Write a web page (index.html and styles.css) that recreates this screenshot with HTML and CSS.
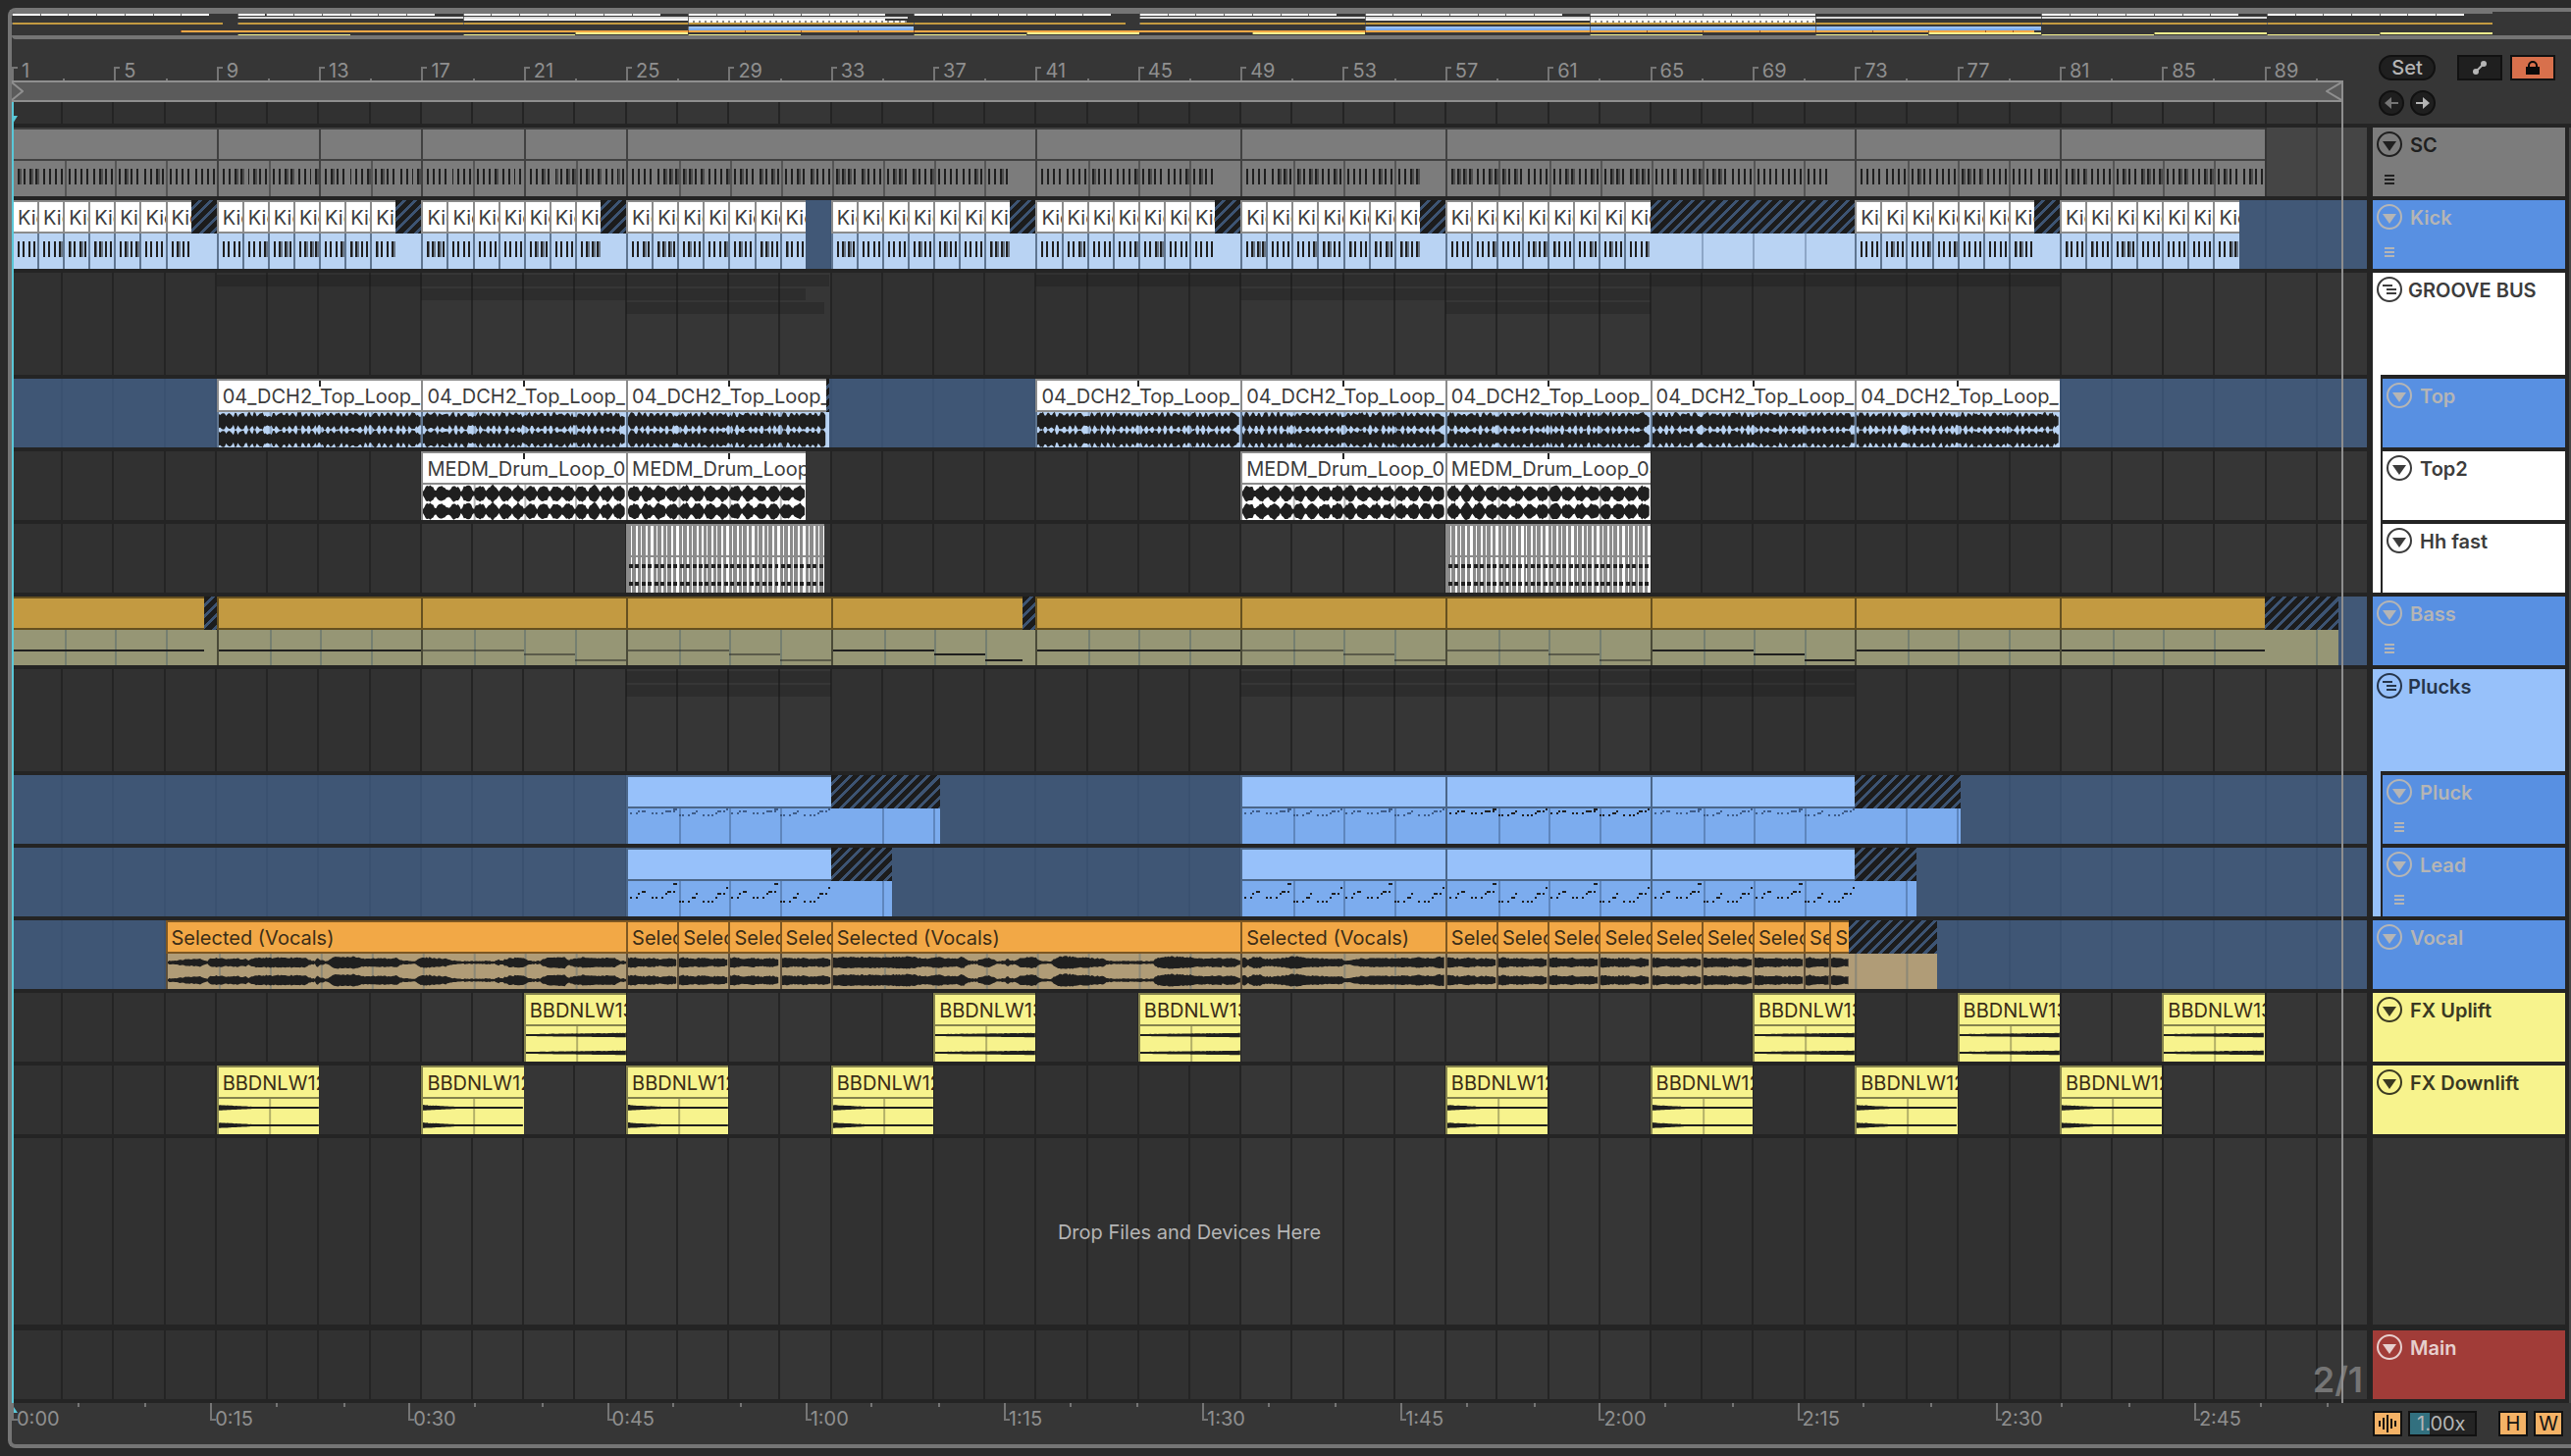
FILE: index.html
```html
<!DOCTYPE html>
<html lang="en">
<head>
    <meta charset="UTF-8">
    <meta name="viewport" content="width=device-width, initial-scale=1.0">
    <title>Arrangement</title>
    <link rel="stylesheet" href="styles.css">
</head>
<body>
    <svg width="0" height="0" class="defs">
        <symbol id="fold" viewBox="0 0 26 26">
            <circle cx="13" cy="13" r="12" fill="none" stroke="currentColor" stroke-width="2"/>
            <path d="M6 10h14l-7 10z" fill="currentColor"/>
        </symbol>
        <symbol id="group" viewBox="0 0 26 26">
            <circle cx="13" cy="13" r="12" fill="none" stroke="currentColor" stroke-width="2"/>
            <path d="M6 9h10M10 13h10M10 17h10" stroke="currentColor" stroke-width="2"/>
        </symbol>
        <symbol id="lines" viewBox="0 0 10 10">
            <path d="M0 1h10M0 5h10M0 9h10" stroke="currentColor" stroke-width="2"/>
        </symbol>
    </svg>

    <div class="frame">
        <div class="overview" id="overview"></div>

        <div class="top">
            <div class="timeline">
                <div class="bar-ruler" id="barRuler"></div>
                <div class="loop">
                    <svg width="12" height="18" viewBox="0 0 12 18"><path d="M0 0l11 9-11 9" fill="none" stroke="#8f8f8f" stroke-width="2"/></svg>
                    <svg width="16" height="18" viewBox="0 0 16 18"><path d="M16 0L1 9l15 9" fill="none" stroke="#8f8f8f" stroke-width="2"/></svg>
                </div>
                <div class="scrub">
                    <div class="grid"></div>
                    <svg class="marker" width="6" height="8" viewBox="0 0 6 8"><path d="M0 0h6L1 8H0z" fill="#5ac8d8"/></svg>
                </div>
            </div>
            <div class="controls">
                <div class="controls-row">
                    <button class="pill">Set</button>
                    <button class="box first" aria-label="Automation">
                        <svg width="16" height="16" viewBox="0 0 16 16"><path d="M4 12l8-8" stroke="currentColor" stroke-width="2"/><circle cx="4" cy="12" r="3" fill="currentColor"/><circle cx="12" cy="4" r="3" fill="currentColor"/></svg>
                    </button>
                    <button class="box lock" aria-label="Lock envelopes">
                        <svg width="14" height="16" viewBox="0 0 14 16"><path d="M3 8V6a4 4 0 0 1 8 0v2" fill="none" stroke="currentColor" stroke-width="2"/><path d="M0 7h14v8H0z" fill="currentColor"/></svg>
                    </button>
                </div>
                <div class="controls-row">
                    <button class="round dim" aria-label="Previous locator">
                        <svg width="14" height="12" viewBox="0 0 14 12"><path d="M0 6l7-6v12z" fill="currentColor"/><path d="M6 6h8" stroke="currentColor" stroke-width="2"/></svg>
                    </button>
                    <button class="round" aria-label="Next locator">
                        <svg width="14" height="12" viewBox="0 0 14 12"><path d="M14 6L7 0v12z" fill="currentColor"/><path d="M0 6h8" stroke="currentColor" stroke-width="2"/></svg>
                    </button>
                </div>
            </div>
        </div>

        <div class="middle">
            <div class="timeline lanes">
                <div class="grid"></div>
                <div class="lane sc" data-track="sc"></div>
                <div class="lane blue kick" data-track="kick"></div>
                <div class="lane tall" data-ghost="groove"></div>
                <div class="lane blue top-loop" data-track="top"></div>
                <div class="lane top2" data-track="top2"></div>
                <div class="lane hh" data-track="hh"></div>
                <div class="lane blue bass" data-track="bass"></div>
                <div class="lane tall" data-ghost="plucks"></div>
                <div class="lane blue pluck" data-track="pluck"></div>
                <div class="lane blue lead" data-track="lead"></div>
                <div class="lane blue vocal" data-track="vocal"></div>
                <div class="lane fx" data-track="uplift"></div>
                <div class="lane fx" data-track="downlift"></div>
                <div class="drop">Drop Files and Devices Here</div>
                <div class="lane main"><span class="zoom-level">2/1</span></div>
                <div class="playhead"></div>
            </div>
            <div class="headers">
                <div class="header h-sc"><button aria-label="Fold SC"><svg><use href="#fold"/></svg></button><span>SC</span><svg class="menu"><use href="#lines"/></svg></div>
                <div class="header h-blue"><button aria-label="Fold Kick"><svg><use href="#fold"/></svg></button><span>Kick</span><svg class="menu"><use href="#lines"/></svg></div>
                <div class="group h-white">
                    <div class="header tall"><button aria-label="Fold GROOVE BUS"><svg><use href="#group"/></svg></button><span>GROOVE BUS</span></div>
                    <div class="children">
                        <div class="header h-blue"><button aria-label="Fold Top"><svg><use href="#fold"/></svg></button><span>Top</span></div>
                        <div class="header h-white"><button aria-label="Fold Top2"><svg><use href="#fold"/></svg></button><span>Top2</span></div>
                        <div class="header h-white"><button aria-label="Fold Hh fast"><svg><use href="#fold"/></svg></button><span>Hh fast</span></div>
                    </div>
                </div>
                <div class="header h-blue"><button aria-label="Fold Bass"><svg><use href="#fold"/></svg></button><span>Bass</span><svg class="menu"><use href="#lines"/></svg></div>
                <div class="group h-light">
                    <div class="header tall"><button aria-label="Fold Plucks"><svg><use href="#group"/></svg></button><span>Plucks</span></div>
                    <div class="children">
                        <div class="header h-blue"><button aria-label="Fold Pluck"><svg><use href="#fold"/></svg></button><span>Pluck</span><svg class="menu"><use href="#lines"/></svg></div>
                        <div class="header h-blue"><button aria-label="Fold Lead"><svg><use href="#fold"/></svg></button><span>Lead</span><svg class="menu"><use href="#lines"/></svg></div>
                    </div>
                </div>
                <div class="header h-blue"><button aria-label="Fold Vocal"><svg><use href="#fold"/></svg></button><span>Vocal</span></div>
                <div class="header h-yellow"><button aria-label="Fold FX Uplift"><svg><use href="#fold"/></svg></button><span>FX Uplift</span></div>
                <div class="header h-yellow"><button aria-label="Fold FX Downlift"><svg><use href="#fold"/></svg></button><span>FX Downlift</span></div>
                <div class="header-space"></div>
                <div class="header h-main"><button aria-label="Fold Main"><svg><use href="#fold"/></svg></button><span>Main</span></div>
            </div>
            <div class="edge"></div>
        </div>

        <div class="bottom">
            <div class="timeline time-ruler" id="timeRuler">
                <svg class="marker" width="6" height="9" viewBox="0 0 6 9"><path d="M0 0l6 9H0z" fill="#5ac8d8"/></svg>
            </div>
            <div class="bottom-controls">
                <button class="key" aria-label="Waveform zoom">
                    <svg width="18" height="18" viewBox="0 0 18 18"><path d="M1 6v6M5 3v12M9 0v18M13 4v10M17 6v6" stroke="currentColor" stroke-width="2"/></svg>
                </button>
                <input class="speed" type="text" value="1.00x" aria-label="Playback speed">
                <button class="key height">H</button>
                <button class="key">W</button>
            </div>
        </div>
    </div>
    <script src="script.js"></script>
</body>
</html>
```
FILE: styles.css
```css
* {
    box-sizing: border-box;
}
body {
    margin: 0;
    background: #2a2a2a;
    color: #b5b5b5;
    font-family: Inter, "Liberation Sans", sans-serif;
    font-size: 20px;
    line-height: 20px;
}
button, input {
    font: inherit;
    color: inherit;
    padding: 0;
    margin: 0;
}
svg {
    display: block;
    flex: none;
}
.defs {
    position: absolute;
}
.frame {
    display: flex;
    flex-direction: column;
    height: calc(100vh - 16px);
    margin: 8px 0 8px 8px;
    border: 4px solid #757575;
    border-right: none;
    border-radius: 8px 0 0 8px;
    background: #363636;
    overflow: hidden;
}

/* overview strip */
.overview {
    flex: none;
    height: 28px;
    border-bottom: 4px solid #757575;
    border-radius: 0 0 0 4px;
    overflow: hidden;
}
.mini-row {
    position: relative;
    height: 2px;
}
.mini-row.gap {
    margin-bottom: 1px;
}
.mini-row.gap2 {
    margin-bottom: 2px;
}
.mini {
    position: absolute;
    top: 0;
    bottom: 0;
    border-left: 1px solid #6b6b6b;
}
.mini-sc { background: #757575; }
.mini-kick { background: #ffffff; }
.mini-top { background: #d8d8d8; }
.mini-top2 { background: #ffffff; }
.mini-hh { background: repeating-linear-gradient(90deg, #ffffff 0 4px, #8b8b8b 4px 6px); }
.mini-bass { background: #c39a41; }
.mini-pluck { background: #97c1fa; }
.mini-lead { background: #7cacee; }
.mini-vocal { background: #f2a846; border-color: #a0561f; }
.mini-uplift, .mini-downlift { background: #f7f38d; border-color: #85834d; }

/* shared columns */
.top, .middle, .bottom {
    display: flex;
}
.timeline {
    flex: 1;
    min-width: 0;
    position: relative;
}
.top {
    flex: none;
    height: 90px;
    border-bottom: 4px solid #242424;
}
.bar-ruler {
    display: flex;
    height: 42px;
    color: #8f8f8f;
}
.bar {
    flex: 1;
    position: relative;
    padding: 22px 0 0 10px;
}
.bar::before {
    content: "";
    position: absolute;
    left: 0;
    bottom: 0;
    width: 4px;
    height: 12px;
    border-left: 2px solid #757575;
    border-top: 2px solid #757575;
}
.bar::after {
    content: "";
    position: absolute;
    left: 50%;
    bottom: 0;
    width: 2px;
    height: 2px;
    background: #757575;
}
.loop {
    display: flex;
    justify-content: space-between;
    height: 22px;
    width: 99%;
    background: #5b5b5b;
    border: 2px solid #8f8f8f;
    border-left: none;
}
.scrub {
    position: relative;
    height: 22px;
}
.scrub .marker {
    position: absolute;
    left: 0;
    top: 14px;
}
.grid {
    position: absolute;
    inset: 0;
    display: flex;
}
.cell {
    flex: 1;
    background: #363636;
    border-left: 2px solid #242424;
}
.cell.dark {
    background: #313131;
}
.cell:first-child {
    border-left: none;
}

.controls {
    width: 208px;
    padding: 16px 0 0 12px;
}
.controls-row {
    display: flex;
    gap: 6px;
    margin-bottom: 10px;
}
.controls button {
    display: flex;
    align-items: center;
    justify-content: center;
    height: 26px;
    border: 2px solid #111111;
    background: #1f1f1f;
    color: #b5b5b5;
}
.controls .pill {
    width: 58px;
    border-radius: 13px;
    font-weight: 500;
}
.controls .box {
    width: 46px;
}
.controls .first {
    margin: 0 2px 0 16px;
}
.controls .lock {
    background: #d8704c;
    color: #0a0a0a;
}
.controls .round {
    width: 26px;
    border-radius: 13px;
}
.controls .dim {
    color: #757575;
}

/* track lanes */
.middle {
    flex: 1;
    min-height: 0;
}
.lanes {
    display: flex;
    flex-direction: column;
}
.lane {
    position: relative;
    flex: none;
    height: 74px;
    border-bottom: 4px solid #242424;
    overflow: hidden;
}
.lane.tall {
    height: 108px;
}
.lane.sc {
    background: rgba(255, 255, 255, 0.08);
}
.lane.blue {
    background: rgba(73, 110, 159, 0.62);
}
.drop {
    position: relative;
    flex: 1;
    display: flex;
    align-items: center;
    justify-content: center;
    padding-top: 2px;
    border-bottom: 6px solid #242424;
}
.zoom-level {
    position: absolute;
    right: 4px;
    bottom: 2px;
    font-size: 36px;
    line-height: 36px;
    font-weight: 600;
    color: #757575;
}
.playhead {
    position: absolute;
    top: -48px;
    bottom: 0;
    left: 0;
    width: 99%;
    border-right: 2px solid #8f8f8f;
    border-left: 2px solid #5ac8d8;
    clip-path: inset(22px 0 0 0);
    pointer-events: none;
}

.clip {
    position: absolute;
    top: 0;
    bottom: 0;
    color: #3c3c3c;
    overflow: hidden;
}
.clip-head {
    height: 34px;
    padding: 2px 0 0 4px;
    border: 2px solid var(--line);
    border-right: none;
    background: var(--head);
    line-height: 28px;
    white-space: nowrap;
    overflow: hidden;
}
.clip-body {
    width: 100%;
    height: 36px;
    background: var(--body);
    border-left: 2px solid var(--edge);
}
.clip.hatch .clip-head {
    border: none;
    background: repeating-linear-gradient(135deg, #1c1c1c 0 5px, #3d5473 5px 8px);
}
.clip.hatch .clip-body {
    border-left: none;
}
.clip.split .clip-head::before {
    content: "";
    position: absolute;
    left: 104px;
    top: 2px;
    width: 2px;
    height: 6px;
    background: #242424;
}
.clip-body .beat { fill: var(--grid); }
.clip-body .note { fill: #1f1f1f; }
.clip-body .soft { fill: #1f1f1f; opacity: 0.5; }

.sc { --head: #7c7c7c; --body: #7c7c7c; --line: #414141; --edge: #414141; --grid: #555555; }
.kick { --head: #ffffff; --body: #b9d3f3; --line: #8b8b8b; --edge: #5f7590; --grid: #8da6c6; }
.top-loop { --head: #ffffff; --body: #b9d3f3; --line: #8b8b8b; --edge: #5f7590; --grid: #8da6c6; }
.top2 { --head: #ffffff; --body: #ffffff; --line: #8b8b8b; --edge: #8b8b8b; --grid: #b5b5b5; }
.hh { --head: #ffffff; --body: #ffffff; --line: #8b8b8b; --edge: #8b8b8b; --grid: #8b8b8b; }
.bass { --head: #c39a41; --body: #969675; --line: #66501f; --edge: #4a4a38; --grid: #757f70; }
.pluck, .lead { --head: #97c1fa; --body: #7cacee; --line: #4b6688; --edge: #4b6688; --grid: #5e86bd; }
.vocal { --head: #f2a846; --body: #b09c77; --line: #7d5722; --edge: #5c4e3a; --grid: #8c8876; }
.fx { --head: #f7f38d; --body: #f7f38d; --line: #85834d; --edge: #85834d; --grid: #b3b068; }
.fx .clip, .vocal .clip { color: #3b2d17; }
.pluck .soft { fill: #2f4a70; opacity: 0.8; }
.hh .clip-head {
    padding: 0;
}
.stripes {
    width: 100%;
    height: 30px;
}

.ghost {
    position: absolute;
    height: 12px;
    background: rgba(20, 20, 20, 0.25);
}
.ghost-1 { top: 2px; }
.ghost-2 { top: 16px; }
.ghost-3 { top: 30px; }

/* track headers */
.headers {
    display: flex;
    flex-direction: column;
    width: 206px;
    border-left: 6px solid #242424;
    border-right: 4px solid #242424;
}
.header {
    position: relative;
    flex: none;
    display: flex;
    align-items: flex-start;
    gap: 8px;
    height: 74px;
    padding: 4px;
    border-bottom: 4px solid #242424;
    font-weight: 600;
}
.header button {
    border: none;
    background: none;
}
.header button svg {
    width: 26px;
    height: 26px;
}
.header span {
    line-height: 28px;
}
.header .menu {
    position: absolute;
    left: 12px;
    top: 48px;
    width: 10px;
    height: 10px;
}
.group {
    flex: none;
    border-bottom: 4px solid #242424;
}
.group .header {
    border-bottom: none;
}
.group .header.tall {
    height: 104px;
    gap: 6px;
}
.children {
    margin-left: 8px;
    border-left: 2px solid #242424;
}
.children .header {
    border-top: 4px solid #242424;
}
.header-space {
    flex: 1;
    border-bottom: 6px solid #242424;
}
.h-sc { background: #7c7c7c; color: #1f1f1f; }
.h-blue { background: #5890e2; color: #b5b5b5; }
.h-white { background: #ffffff; color: #3c3c3c; }
.h-light { background: #97c1fa; color: #26364c; }
.h-yellow { background: #f7f38d; color: #3a3922; }
.h-main { background: #a13c38; color: #e6cfce; }
.edge {
    width: 2px;
    background: #464646;
}

/* bottom row */
.bottom {
    flex: none;
    height: 42px;
}
.time-ruler {
    display: flex;
    overflow: hidden;
    color: #8f8f8f;
}
.time-ruler .marker {
    position: absolute;
    left: 0;
    top: 1px;
}
.time {
    flex: none;
    position: relative;
    padding: 6px 0 0 5px;
}
.time::before {
    content: "";
    position: absolute;
    left: 0;
    top: 0;
    width: 4px;
    height: 16px;
    border-left: 2px solid #757575;
    border-bottom: 2px solid #757575;
}
.time i {
    position: absolute;
    top: 0;
    left: 33%;
    width: 2px;
    height: 4px;
    background: #757575;
}
.time i + i {
    left: 67%;
}
.bottom-controls {
    display: flex;
    gap: 6px;
    width: 208px;
    padding: 8px 8px 8px 6px;
}
.key {
    display: flex;
    align-items: center;
    justify-content: center;
    width: 30px;
    height: 26px;
    border: 2px solid #111111;
    background: #f4b266;
    color: #111111;
}
.bottom-controls .height {
    margin-left: auto;
}
.speed {
    width: 70px;
    height: 26px;
    padding-left: 7px;
    border: 2px solid #111111;
    background: linear-gradient(90deg, #32707f 20px, #242424 20px);
}
```
FILE: script.js
```javascript
const BARS = 92;
const SECONDS_PER_BAR = 60 / 124 * 4;

// [start, end, label, kind]
const tracks = {
    sc: [], kick: [], top: [], top2: [], hh: [], bass: [],
    pluck: [], lead: [], vocal: [], uplift: [], downlift: []
};

function clips(track, edges, label) {
    for (let i = 0; i < edges.length - 1; i++) {
        tracks[track].push([edges[i], edges[i + 1], label || '', 'clip']);
    }
}

function hatch(track, start, end) {
    tracks[track].push([start, end, '', 'hatch']);
}

clips('sc', [1, 9, 13, 17, 21, 25, 41, 49, 57, 73, 81, 89]);

[1, 9, 17, 25, 33, 41, 49, 57, 73, 81].forEach(start => {
    const count = start === 57 ? 8 : 7;
    for (let i = 0; i < count; i++) {
        tracks.kick.push([start + i, start + i + 1, 'Kick', 'clip']);
    }
});
[8, 16, 24, 40, 48, 56, 80].forEach(bar => hatch('kick', bar, bar + 1));
hatch('kick', 65, 73);

clips('top', [9, 17, 25, 32.8], '04_DCH2_Top_Loop_');
hatch('top', 32.8, 32.95);
clips('top', [41, 49, 57, 65, 73, 81], '04_DCH2_Top_Loop_');
clips('top2', [17, 25, 32], 'MEDM_Drum_Loop_04');
clips('top2', [49, 57, 65], 'MEDM_Drum_Loop_04');
clips('hh', [25, 32.75]);
clips('hh', [57, 65]);

clips('bass', [1, 8.5]);
hatch('bass', 8.5, 9);
clips('bass', [9, 17, 25, 33, 40.5]);
hatch('bass', 40.5, 41);
clips('bass', [41, 49, 57, 65, 73, 81, 89]);
hatch('bass', 89, 91.9);

clips('pluck', [25, 33]);
hatch('pluck', 33, 37.26);
clips('pluck', [49, 57, 65, 73]);
hatch('pluck', 73, 77.13);
clips('lead', [25, 33]);
hatch('lead', 33, 35.4);
clips('lead', [49, 57, 65, 73]);
hatch('lead', 73, 75.4);

clips('vocal', [7, 25, 27, 29, 31, 33, 49, 57, 59, 61, 63, 65, 67, 69, 71, 72, 72.76], 'Selected (Vocals)');
hatch('vocal', 72.76, 76.2);

[21, 37, 45, 69, 77, 85].forEach(b => clips('uplift', [b, b + 4], 'BBDNLW13_Uplift'));
[9, 17, 25, 33, 57, 65, 73, 81].forEach(b => clips('downlift', [b, b + 4], 'BBDNLW12_Downlift'));

const ghosts = {
    groove: [[1, 9, 32.95], [1, 41, 81], [2, 17, 32], [2, 49, 65], [3, 25, 32.75], [3, 57, 65]],
    plucks: [[1, 25, 33], [1, 49, 73], [2, 25, 33], [2, 49, 73]]
};

let seed = 7;
function rand() {
    seed = (seed * 16807) % 2147483647;
    return seed / 2147483647;
}

function rect(x, y, w, h, cls) {
    return `<rect class="${cls}" x="${x}" y="${y}" width="${w}" height="${h}"/>`;
}

// stereo waveform, one filled shape for each channel
function wave(width, amp) {
    const up = [];
    const down = [];
    for (let x = 0; x <= width; x += 1.5) {
        const a = amp(x);
        up.push([x, a]);
        down.unshift([x, -a * (0.85 + rand() * 0.2)]);
    }
    return [9, 27].map(mid =>
        `<path class="note" d="M${up.concat(down).map(p => p[0].toFixed(1) + ' ' + (mid + p[1]).toFixed(1)).join('L')}Z"/>`
    ).join('');
}

function kickNotes(start, end) {
    let out = '';
    for (let b = start; b < end; b++) {
        if ([40, 48, 56, 72].includes(b)) continue;
        for (let i = 0; i < 4; i++) {
            const x = (b - start) * 26 + 4 + i * 6;
            out += rect(x, 8, 2, 16, 'note');
            if (rand() < 0.3) out += rect(x + 2, 8, 2, 16, 'soft');
        }
    }
    return out;
}

const phrase = [
    [2, 16, 2], [8, 16, 2], [10, 12, 2], [14, 10, 4], [24, 16, 2], [28, 16, 2], [34, 16, 2], [38, 12, 2], [40, 10, 4], [46, 10, 2], [46, 2, 4],
    [52, 20, 2], [55, 20, 2], [61, 20, 2], [65, 16, 4], [69, 12, 2], [76, 20, 2], [82, 20, 2], [86, 20, 2], [90, 16, 2], [92, 12, 4], [98, 12, 2], [101, 6, 2]
];

function melody(bars, flat, cls) {
    let out = '';
    for (let b = 0; b < bars; b += 4) {
        phrase.forEach(([x, y, w]) => {
            if (flat) y = y >= 20 ? 6 : y >= 16 ? 4 : y >= 10 ? 2 : 0;
            out += rect(b * 26 + x, y, w, 2, cls);
        });
    }
    return out;
}

function bassLine(start, bars) {
    const cls = [17, 25, 49, 57].includes(start) ? 'soft' : 'note';
    if ([1, 9, 41, 73, 81].includes(start)) return rect(0, 20, bars * 26, 2, cls);
    return rect(0, 20, 104, 2, cls) + rect(104, 24, 52, 2, cls) + rect(156, 30, (bars - 6) * 26, 2, cls);
}

// repeating 5-hit pattern of the closed hat
function hatStripes(bars, height) {
    let out = '';
    for (let x = 0; x < bars * 26; x += 26) {
        [0, 4, 10, 14, 20].forEach(s => {
            out += rect(x + s, 0, s % 10 ? 4 : 3, height, 'beat');
        });
    }
    return out;
}

function content(track, start, end) {
    const bars = end - start;
    const w = bars * 26;
    let level = 4;
    let target = 5;
    switch (track) {
        case 'sc':
        case 'kick':
            return kickNotes(start, end);
        case 'top':
            return wave(w, x => 9 - (x % 6.5 < 3 ? 2 + rand() * 3 : rand()) - (x % 52 > 49 ? 4 : 0));
        case 'top2':
            return wave(w, x => Math.max(2, 1 + 8 * Math.sqrt(Math.abs(Math.sin(x / 13 * Math.PI))) - rand() * 2));
        case 'hh':
            let out = hatStripes(bars, 36);
            for (let x = 0; x < w; x += 6.5) out += rect(x + 1, 7, 4, 4, 'note') + rect(x + 1, 25, 4, 4, 'note');
            return out;
        case 'bass':
            return bassLine(start, bars);
        case 'pluck':
            return melody(bars, true, start === 57 ? 'note' : 'soft');
        case 'lead':
            return melody(bars, false, 'note');
        case 'vocal':
            if (bars <= 2) return wave(w, x => 4.2 - x / 52 * 0.8 + Math.sin(x / 3) * 0.5 + rand());
            return wave(w, x => {
                if (rand() < 0.12) target = rand() < 0.3 ? 1 : 3 + rand() * 3;
                level += (target - level) * 0.4;
                return level * (start === 7 ? Math.min(1, 0.2 + x / 50) : 1) + rand();
            });
        case 'uplift':
            return wave(w, x => 1 + x / w * 1.3);
        case 'downlift':
            return wave(w, x => Math.max(1, 2.8 - x / 20));
    }
}

function drawTrack(lane, track) {
    tracks[track].forEach(([start, end, label, kind]) => {
        const bars = end - start;
        const w = bars * 26;
        let beats = '';
        for (let b = Math.floor(start) + 1; b < end; b++) {
            if (b % 2 === 1 && track !== 'hh') beats += rect((b - start) * 26, 0, 2, 36, 'beat');
        }
        const clip = document.createElement('div');
        clip.className = 'clip ' + kind;
        if (kind === 'clip' && (track === 'top' || track === 'top2')) clip.className += ' split';
        clip.style.left = (start - 1) / BARS * 100 + '%';
        clip.style.width = bars / BARS * 100 + '%';
        const head = track === 'hh'
            ? `<svg class="stripes" viewBox="0 0 ${w} 30" preserveAspectRatio="none" shape-rendering="crispEdges" fill="#8b8b8b">${hatStripes(bars, 30)}</svg>`
            : label;
        const inner = kind === 'hatch' ? '' : content(track, start, end);
        const crisp = ['top', 'top2', 'vocal', 'uplift', 'downlift'].includes(track) ? 'auto' : 'crispEdges';
        clip.innerHTML = `<div class="clip-head">${head}</div>
            <svg class="clip-body" viewBox="0 0 ${w} 36" preserveAspectRatio="none" shape-rendering="${crisp}">${beats}${inner}</svg>`;
        lane.appendChild(clip);
    });
}

document.querySelectorAll('.grid').forEach(grid => {
    for (let i = 0; i < BARS / 2; i++) {
        const cell = document.createElement('div');
        cell.className = Math.floor(i / 8) % 2 ? 'cell' : 'cell dark';
        grid.appendChild(cell);
    }
});

document.querySelectorAll('[data-track]').forEach(lane => drawTrack(lane, lane.dataset.track));

document.querySelectorAll('[data-ghost]').forEach(lane => {
    ghosts[lane.dataset.ghost].forEach(([row, start, end]) => {
        const ghost = document.createElement('div');
        ghost.className = 'ghost ghost-' + row;
        ghost.style.left = (start - 1) / BARS * 100 + '%';
        ghost.style.width = (end - start) / BARS * 100 + '%';
        lane.appendChild(ghost);
    });
});

const barRuler = document.getElementById('barRuler');
for (let b = 1; b < BARS; b += 4) {
    barRuler.innerHTML += `<div class="bar">${b}</div>`;
}

const timeRuler = document.getElementById('timeRuler');
const total = BARS * SECONDS_PER_BAR;
for (let t = 0; t < total; t += 15) {
    const label = Math.floor(t / 60) + ':' + String(t % 60).padStart(2, '0');
    timeRuler.insertAdjacentHTML('beforeend', `<div class="time" style="width: ${15 / total * 100}%">${label}<i></i><i></i></div>`);
}

const overview = document.getElementById('overview');
const gaps = { kick: ' gap', bass: ' gap2' };
Object.keys(tracks).forEach(track => {
    const row = document.createElement('div');
    row.className = 'mini-row' + (gaps[track] || '');
    tracks[track].filter(c => c[3] === 'clip').forEach(([start, end]) => {
        const mini = document.createElement('div');
        mini.className = 'mini mini-' + track;
        mini.style.left = (start - 1) / 90.8 * 100 + '%';
        mini.style.width = (end - start) / 90.8 * 100 + '%';
        row.appendChild(mini);
    });
    overview.appendChild(row);
});
```
